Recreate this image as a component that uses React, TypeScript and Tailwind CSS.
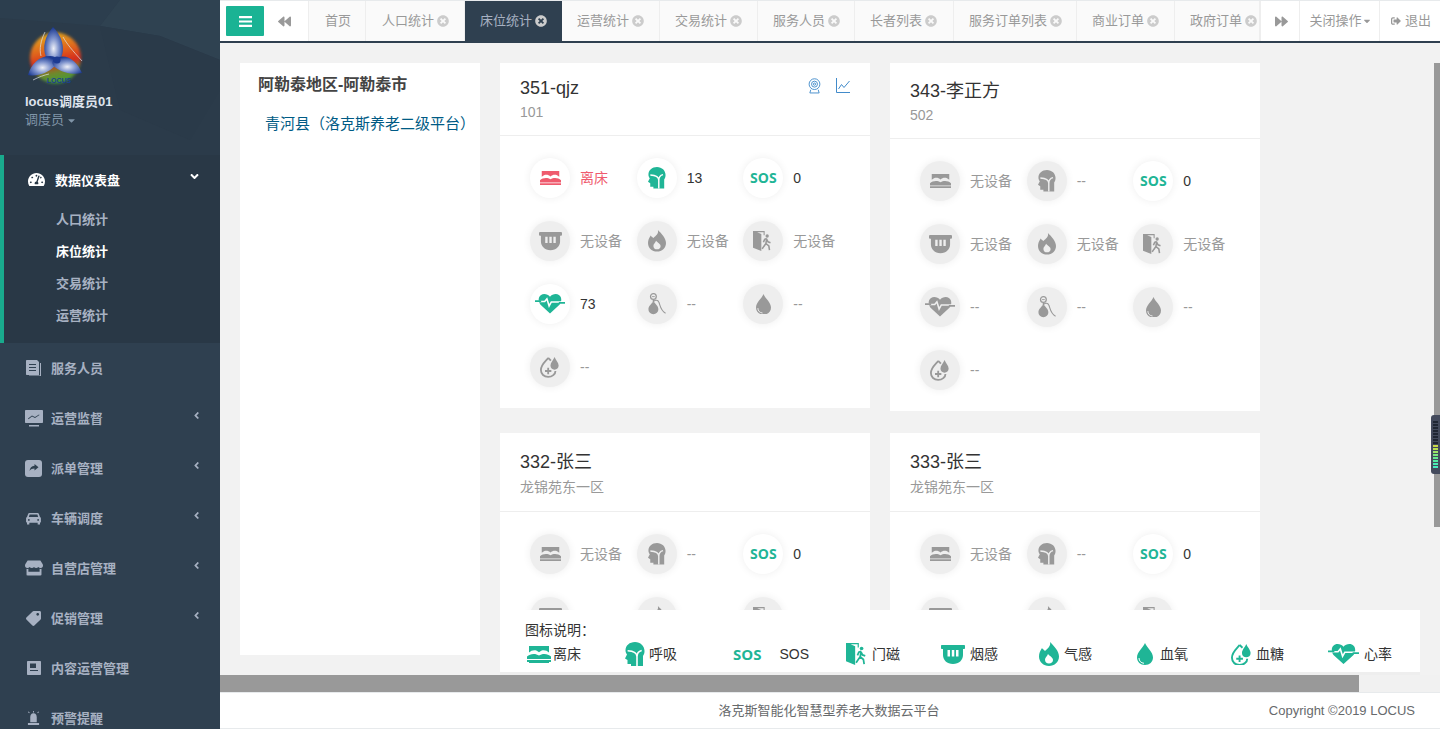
import React from "react";
import { FaBackward, FaForward, FaTimesCircle, FaSignOutAlt, FaCaretDown, FaAngleLeft, FaAngleDown, FaTachometerAlt, FaStore, FaTag } from "react-icons/fa";

const GREEN = "#1fb596";
const FONT = "font-['Liberation_Sans','Noto_Sans_CJK_SC',sans-serif]";

type IconProps = { c: string; bg: string; w: number };

function Bed({ c, w }: IconProps) {
  return (
    <svg viewBox="0 0 24 17" width={w} fill={c}>
      <path d="M2 0h20v6.500l-2.500-1.700c-2.500-1-5.500-.6-7.500 1.500-2-2.100-5-2.500-7.500-1.500L2 6.500z" />
      <path d="M0 10.500c3-3 8.500-3.500 12-1 3.500-2.500 9-2 12 1V13H0z" />
      <path d="M0 14h24v2H22v1H2v-1H0z" />
    </svg>
  );
}
function Head({ c, bg, w }: IconProps) {
  return (
    <svg viewBox="0 0 20 24" width={w} fill={c}>
      <path d="M10 0c5.500 0 9.500 4 9.500 9 0 2-.5 3.500-1.500 5v10H6v-2H2.500v-4L0 16.500l2-4C1 11 .5 10 .5 8.500.5 3.500 4.500 0 10 0z" />
      <path d="M2.600 8.800c4 .2 9.400 1.500 9.400 6V24M16.700 8.500c-2.700.6-4.700 3-4.700 6.300" fill="none" stroke={bg} strokeWidth="1.600" />
    </svg>
  );
}
function Flame({ c, w }: IconProps) {
  return (
    <svg viewBox="0 0 20 24" width={w} fill={c}>
      <path fillRule="evenodd" d="M11 0c1 4-2 6-5 9-1.500-1.500-2.500-2-3-3C1 9 0 11.500 0 14.500 0 20 4.500 24 10 24s10-4 10-9.500C20 9 15 4 11 0zM10 21.500c-2.500 0-4-1.800-4-3.800 0-2.200 2-3.200 3-5.700 1.500 2 5 3.500 5 6 0 2-1.700 3.500-4 3.500z" />
    </svg>
  );
}
function Door({ c, w }: IconProps) {
  return (
    <svg viewBox="0 0 24 24" width={w} fill={c}>
      <path d="M0 0h14v5h-1.300V1.400H5L10 3.500V24L0 20z" />
      <circle cx="17" cy="6" r="2" />
      <path d="M16.500 9l-2.500 1-1.500 3.500M16.500 9l-1 6-2.500 3.500-2 3M15.500 15l3.500 3 .8 5M16.500 10l1.500 3 3 1" fill="none" stroke={c} strokeWidth="1.900" />
    </svg>
  );
}
function Smoke({ c, w }: IconProps) {
  return (
    <svg viewBox="0 0 24 20" width={w} fill={c}>
      <path fillRule="evenodd" d="M1 1h22c.6 0 1 .4 1 1v2c0 .6-.4 1-1 1h-1v6c0 5-4 9-10 9S2 16 2 11V5H1c-.6 0-1-.4-1-1V2c0-.6.4-1 1-1zM6.500 6v6.500H9V6zM10.800 6v6.500h2.500V6zM15 6v6.500h2.500V6z" />
    </svg>
  );
}
function Heart({ c, bg, w }: IconProps) {
  return (
    <svg viewBox="-2 0 34 22" width={w} fill={c}>
      <path d="M15 22L4 12C0 6 3 0 8.500 0 11 0 13.500 1 15 3c1.500-2 4-3 6.500-3C27 0 30 6 26 12z" />
      <path d="M-2 8.500h11l2.500-3 2.500 8 2.500-4.500h15" fill="none" stroke={bg} strokeWidth="1.800" />
      <path d="M-2 8h7M25 10h7" fill="none" stroke={c} strokeWidth="1.900" />
    </svg>
  );
}
function Pressure({ c, w }: IconProps) {
  return (
    <svg viewBox="0 0 20 24" width={w} fill={c}>
      <circle cx="6" cy="4" r="3.200" fill="none" stroke={c} strokeWidth="1.400" />
      <path d="M4.500 4h3" stroke={c} strokeWidth="1" />
      <path d="M6 7.500v3.500" stroke={c} strokeWidth="1.500" />
      <path d="M4.500 10.500h3c.5 2 4 3.500 4 7.500 0 3-2.500 5.500-5.500 5.500S.5 21 .5 18c0-4 3.500-5.500 4-7.500z" />
      <path d="M6 9.500c2-2 5-2 6 .5 1.500 3 1.500 9 7.500 12.500" fill="none" stroke={c} strokeWidth="1.200" />
    </svg>
  );
}
function Drop({ c, bg, w }: IconProps) {
  return (
    <svg viewBox="0 0 16 22" width={w} fill={c}>
      <path d="M8 0C6 5 0 9 0 14.500 0 19 3.500 22 8 22s8-3 8-7.500C16 9 10 5 8 0z" />
      <path d="M2 15c0 3 2 5 5 5.300" fill="none" stroke={bg} strokeWidth="1" />
    </svg>
  );
}
function Glucose({ c, w }: IconProps) {
  return (
    <svg viewBox="0 0 22 24" width={w} fill={c}>
      <path d="M9 2C7.500 5 1 9 1 15.500 1 20 4.500 23 9 23s8-3 8-6.500" fill="none" stroke={c} strokeWidth="2" />
      <path d="M9 2l3 3" fill="none" stroke={c} strokeWidth="2" />
      <path d="M16 1c-1 3-4.500 6-4.500 9.500 0 3 2 4.500 4.500 4.500s4.500-1.500 4.500-4.500C20.500 7 17 4 16 1z" />
      <path d="M8 13h2v2.500h2.500v2H10V20H8v-2.500H5.500v-2H8z" />
    </svg>
  );
}
function SOS({ c, w }: IconProps) {
  return (
    <span className="font-['Open_Sans',sans-serif] font-bold leading-none" style={{ color: c, fontSize: w }}>
      SOS
    </span>
  );
}

const ICONS = {
  bed: { C: Bed, w: 21 },
  head: { C: Head, w: 18 },
  sos: { C: SOS, w: 14 },
  smoke: { C: Smoke, w: 23 },
  flame: { C: Flame, w: 18 },
  door: { C: Door, w: 20 },
  heart: { C: Heart, w: 30 },
  bp: { C: Pressure, w: 18 },
  drop: { C: Drop, w: 15 },
  glucose: { C: Glucose, w: 20 },
};
type IconName = keyof typeof ICONS;

type Item = { icon: IconName; text: string; state?: "on" | "alert" };

function Sensor({ icon, text, state }: Item) {
  const { C, w } = ICONS[icon];
  const on = !!state;
  const c = state === "alert" ? "#ef5b6e" : state === "on" ? GREEN : "#999999";
  const bg = on ? "#ffffff" : "#eeeeee";
  return (
    <div className="flex items-center h-10 mb-[23px]">
      <div
        className={`w-10 h-10 rounded-full flex items-center justify-center flex-none shadow-[0_0_8px_rgba(0,0,0,0.07)] ${on ? "bg-white" : "bg-[#eeeeee]"}`}
      >
        <C c={c} bg={bg} w={w} />
      </div>
      <span className={`ml-2.5 text-sm ${state === "alert" ? "text-[#ef5b6e]" : state === "on" ? "text-[#333333]" : "text-[#999999]"}`}>{text}</span>
    </div>
  );
}

const offlineFull: Item[] = [
  { icon: "bed", text: "无设备" },
  { icon: "head", text: "--" },
  { icon: "sos", text: "0", state: "on" },
  { icon: "smoke", text: "无设备" },
  { icon: "flame", text: "无设备" },
  { icon: "door", text: "无设备" },
  { icon: "heart", text: "--" },
  { icon: "bp", text: "--" },
  { icon: "drop", text: "--" },
  { icon: "glucose", text: "--" },
];

const first: Item[] = [
  { icon: "bed", text: "离床", state: "alert" },
  { icon: "head", text: "13", state: "on" },
  { icon: "sos", text: "0", state: "on" },
  { icon: "smoke", text: "无设备" },
  { icon: "flame", text: "无设备" },
  { icon: "door", text: "无设备" },
  { icon: "heart", text: "73", state: "on" },
  { icon: "bp", text: "--" },
  { icon: "drop", text: "--" },
  { icon: "glucose", text: "--" },
];

function Card({ title, sub, items, head, subc, actions }: { title: string; sub: string; items: Item[]; head: string; subc: string; actions?: boolean }) {
  return (
    <div className="w-[370px] bg-white self-start">
      <div className={`relative px-5 border-b border-[#eeeeee] ${head}`}>
        <div className="text-lg leading-[26px] text-[#333333]">{title}</div>
        <div className={`text-sm leading-5 text-[#999999] ${subc}`}>{sub}</div>
        {actions && (
          <div className="absolute right-5 top-[15px] flex gap-[15px]">
            <svg viewBox="0 0 14 17" width="13" height="16" fill="none" stroke="#428bca" strokeWidth="1">
              <circle cx="7" cy="6.500" r="5.800" />
              <circle cx="7" cy="6.500" r="3.200" />
              <circle cx="7" cy="6.500" r="1.200" />
              <path d="M3 12.500l-1 3.500h10l-1-3.500" />
            </svg>
            <svg viewBox="0 0 14 15" width="14" height="15" fill="none" stroke="#428bca" strokeWidth="1">
              <path d="M.5 0v14.500H14" />
              <path d="M2.500 11l3-4.500 2.500 3L13.500 3" />
            </svg>
          </div>
        )}
      </div>
      <div className="grid grid-cols-3 pl-[30px] pr-5 pt-[22px] pb-[21px] [&>*:nth-last-child(1)]:mb-0">
        {items.map((it, i) => (
          <Sensor key={i} {...it} />
        ))}
      </div>
    </div>
  );
}

function Logo() {
  return (
    <svg viewBox="0 0 60 62" width="60" height="62">
      <defs>
        <linearGradient id="rim" x1="0.3" y1="0" x2="0.5" y2="1">
          <stop offset="0%" stopColor="#e3ac1e" />
          <stop offset="38%" stopColor="#e0621e" />
          <stop offset="62%" stopColor="#d4281f" />
          <stop offset="80%" stopColor="#6f8a2c" />
          <stop offset="100%" stopColor="#3f9a3a" />
        </linearGradient>
        <radialGradient id="petal" cx="50%" cy="60%" r="58%">
          <stop offset="0%" stopColor="#eef0f8" />
          <stop offset="50%" stopColor="#7d92cc" />
          <stop offset="100%" stopColor="#1c3a92" />
        </radialGradient>
        <filter id="soft">
          <feGaussianBlur stdDeviation="1.400" />
        </filter>
      </defs>
      <circle cx="29.500" cy="33" r="25.500" fill="url(#rim)" filter="url(#soft)" />
      <path d="M27 2C19 11 16 22 20 32c3 6 7 7 11 5 8-5 9-22-4-35z" fill="url(#petal)" />
      <path d="M2 50c3-11 11-19 22-19 7 0 9 5 5 10-7 7-18 11-27 9z" fill="url(#petal)" />
      <path d="M56 48c-4-10-13-19-24-16-7 2-7 8-2 11 7 5 18 7 26 5z" fill="url(#petal)" />
      <circle cx="31" cy="35" r="3.500" fill="#1c3a92" />
      <path d="M19 7c-4 8-6 17-4 24M37 12c4 7 9 13 19 24M7 55c6-3 11-5 16-6" fill="none" stroke="#dfe3ea" strokeWidth="0.700" />
      <text x="33" y="58" fill="#1c3f90" fontSize="7" fontWeight="700" fontFamily="'Liberation Sans',sans-serif" textAnchor="middle">LOCUS</text>
    </svg>
  );
}

function Monitor() {
  return (
    <svg viewBox="0 0 18 17" width="18" height="17" fill="#a7b1c2">
      <path fillRule="evenodd" d="M1 0h16c.6 0 1 .4 1 1v11c0 .6-.4 1-1 1H1c-.6 0-1-.4-1-1V1c0-.6.4-1 1-1zM3 8.500l.5.7 3.500-2.700 3 1.500 4.500-3-.5-.6L10 7 7 5.500z" />
      <path d="M4 15h10v1.500H4z" />
    </svg>
  );
}
function Doc() {
  return (
    <svg viewBox="0 0 15 16" width="15" height="16" fill="#a7b1c2">
      <path fillRule="evenodd" d="M1 0h10l2 2v13H1c-.6 0-1-.4-1-1V1c0-.6.4-1 1-1zM3 4v1h7V4zM3 7v1h7V7zM3 10v1h7v-1z" />
      <path d="M14 3h1v13H3v-.5h11z" />
    </svg>
  );
}
function News() {
  return (
    <svg viewBox="0 0 14 14" width="14" height="14" fill="#a7b1c2">
      <path fillRule="evenodd" d="M1 0h12c.6 0 1 .4 1 1v12c0 .6-.4 1-1 1H1c-.6 0-1-.4-1-1V1c0-.6.4-1 1-1zM3 2.500V7h6V2.500zM3 9v1h8V9z" />
    </svg>
  );
}
function Alarm() {
  return (
    <svg viewBox="0 0 14 15" width="13" height="14" fill="#a7b1c2">
      <path d="M7 2.500c2.500 0 3.500 2 3.500 4.500v5h-7V7c0-2.500 1-4.500 3.500-4.500z" />
      <path d="M1 13h12v2H1zM6.500 0h1v1.500h-1zM1 1l.8-.6 1.200 1.500-.8.6zM13 1l-.8-.6-1.200 1.500.8.6z" />
    </svg>
  );
}
function ShareBox() {
  return (
    <svg viewBox="0 0 17 17" width="17" height="17">
      <rect width="17" height="17" rx="3" fill="#a7b1c2" />
      <path d="M9.500 4l4 3.200-4 3.200V8.500c-2.300 0-3.700.7-5 2.500.4-3 2-5 5-5.200z" fill="#2f4050" />
    </svg>
  );
}
function CarFront() {
  return (
    <svg viewBox="0 0 16 14" width="15" height="13" fill="#a7b1c2">
      <path fillRule="evenodd" d="M3.500 1h9c.5 0 1 .3 1.200.8L15 5.500c.6.3 1 .8 1 1.500v3.500c0 .5-.5 1-1 1v2h-2.500v-2h-9v2H1v-2c-.5 0-1-.5-1-1V7c0-.7.4-1.200 1-1.500l1.300-3.700C2.500 1.300 3 1 3.500 1zM3.800 2.800L3 5.500h10l-.8-2.700zM3 7.500a1 1 0 1 0 0 2 1 1 0 0 0 0-2zM13 7.500a1 1 0 1 0 0 2 1 1 0 0 0 0-2z" />
    </svg>
  );
}

const menu: { t: string; icon: React.ReactNode; arrow?: boolean }[] = [
  { t: "服务人员", icon: <Doc /> },
  { t: "运营监督", icon: <Monitor />, arrow: true },
  { t: "派单管理", icon: <ShareBox />, arrow: true },
  { t: "车辆调度", icon: <CarFront />, arrow: true },
  { t: "自营店管理", icon: <FaStore size={18} />, arrow: true },
  { t: "促销管理", icon: <FaTag size={15} className="-scale-x-100" />, arrow: true },
  { t: "内容运营管理", icon: <News /> },
  { t: "预警提醒", icon: <Alarm /> },
];

function Sidebar() {
  return (
    <aside className="w-[220px] flex-none bg-[#2f4050] overflow-hidden flex flex-col h-full">
      <div className="relative h-[155px] flex-none bg-[#2b3b4a] overflow-hidden">
        <svg className="absolute inset-0" width="220" height="155" viewBox="0 0 220 155">
          <path d="M0 0h120l-20 26L0 18z" fill="#2c3e4e" />
          <path d="M120 0h100v60l-60-24-60-10z" fill="#2f4251" />
          <path d="M100 26l60 10 60 24v30l-30 50-70-30z" fill="#2a3a49" />
        </svg>
        <div className="absolute left-[26px] top-[25px]">
          <Logo />
        </div>
        <div className="absolute left-[25px] top-[94px] text-[13px] leading-4 font-bold text-[#dfe4ed]">locus调度员01</div>
        <div className="absolute left-[25px] top-[112px] text-[13px] leading-4 text-[#8095a8] flex items-center">
          调度员
          <FaCaretDown size={11} className="ml-0.5" />
        </div>
      </div>
      <div className="bg-[#293846] border-l-4 border-[#19aa8d] h-[188px] flex-none">
        <div className="h-[49px] flex items-center pl-[24px] pr-[19px] text-white font-semibold text-[13px]">
          <FaTachometerAlt size={17} className="flex-none" />
          <span className="ml-2.5 flex-1 pt-0.5">数据仪表盘</span>
          <FaAngleDown size={13} className="-mt-1.5" />
        </div>
        {["人口统计", "床位统计", "交易统计", "运营统计"].map((s, i) => (
          <div key={s} className={`h-8 flex items-center pl-[52px] text-[13px] font-semibold ${i === 1 ? "text-white" : "text-[#a7b1c2]"}`}>
            {s}
          </div>
        ))}
      </div>
      {menu.map((m) => (
        <div key={m.t} className="h-[50px] flex-none flex items-center text-[#a7b1c2] text-[13px] font-semibold pr-[18px]">
          <div className="w-[51px] flex-none flex justify-center pl-[24px] pr-[8px]">{m.icon}</div>
          <span className="flex-1 pt-0.5">{m.t}</span>
          {m.arrow && <FaAngleLeft size={11} className="-mt-1.5" />}
        </div>
      ))}
    </aside>
  );
}

const tabs: { t: string; w: string; p: string }[] = [
  { t: "人口统计", w: "w-[99px]", p: "pl-4" },
  { t: "床位统计", w: "w-[97px]", p: "pl-[15px]" },
  { t: "运营统计", w: "w-[98px]", p: "pl-[15px]" },
  { t: "交易统计", w: "w-[98px]", p: "pl-[15px]" },
  { t: "服务人员", w: "w-[97px]", p: "pl-[15px]" },
  { t: "长者列表", w: "w-[99px]", p: "pl-[15px]" },
  { t: "服务订单列表", w: "w-[123px]", p: "pl-[15px]" },
  { t: "商业订单", w: "w-[98px]", p: "pl-[15px]" },
  { t: "政府订单", w: "w-[85px]", p: "pl-[15px]" },
];

function TopBar() {
  return (
    <header className="h-[43px] flex-none flex bg-white border-t border-[#e7eaec] border-b-2 border-b-[#2f4050] text-[13px] text-[#999999]">
      <div className="w-[44px] flex-none flex items-center justify-end">
        <div className="w-[38px] h-[30px] bg-[#1ab394] flex items-center justify-center rounded-[1px]">
          <svg width="13" height="11" viewBox="0 0 13 11" fill="#fff">
            <path d="M0 0h13v2.200H0zM0 4.400h13v2.200H0zM0 8.800h13V11H0z" />
          </svg>
        </div>
      </div>
      <div className="w-[45px] flex-none flex items-center justify-center pr-1 border-r border-[#eeeeee]">
        <FaBackward size={13} className="text-[#999999]" />
      </div>
      <div className="w-[57px] flex-none flex items-center justify-center pl-0.5 bg-[#fafafa] border-r border-[#eeeeee]">首页</div>
      {tabs.map((x, i) => {
        const active = i === 1;
        return (
          <div
            key={x.t}
            className={`${x.w} ${x.p} flex-none flex items-center overflow-hidden ${active ? "bg-[#2f4050] text-[#a7b1c2]" : "bg-[#fafafa] border-r border-[#eeeeee]"}`}
          >
            <span className="flex-none">{x.t}</span>
            <span className="relative flex-none ml-[3px] w-3 h-3 flex items-center justify-center">
              <FaTimesCircle size={12} className="text-[#cccccc]" />
            </span>
          </div>
        );
      })}
      <div className="w-[40px] flex-none flex items-center justify-center pl-0.5 border-l border-r border-[#eeeeee]">
        <FaForward size={13} className="text-[#999999]" />
      </div>
      <div className="w-[80px] flex-none flex items-center justify-center pl-0.5 border-r border-[#eeeeee]">
        关闭操作
        <FaCaretDown size={10} />
      </div>
      <div className="flex-1 flex items-center justify-center pl-0.5">
        <FaSignOutAlt size={10} className="mr-1" />
        退出
      </div>
    </header>
  );
}

const legend: { icon: IconName; iw: number; t: string; w: string; gap: string }[] = [
  { icon: "bed", iw: 24, t: "离床", w: "w-[98px]", gap: "ml-0.5" },
  { icon: "head", iw: 20, t: "呼吸", w: "w-[108px]", gap: "ml-1" },
  { icon: "sos", iw: 15, t: "SOS", w: "w-[113px]", gap: "ml-[18px]" },
  { icon: "door", iw: 22, t: "门磁", w: "w-[95px]", gap: "ml-1" },
  { icon: "smoke", iw: 24, t: "烟感", w: "w-[98px]", gap: "ml-[5px]" },
  { icon: "flame", iw: 20, t: "气感", w: "w-[98px]", gap: "ml-[5px]" },
  { icon: "drop", iw: 16, t: "血氧", w: "w-[94px]", gap: "ml-[7px]" },
  { icon: "glucose", iw: 21, t: "血糖", w: "w-[97px]", gap: "ml-1" },
  { icon: "heart", iw: 31, t: "心率", w: "w-[109px]", gap: "ml-[5px]" },
];

function Legend() {
  return (
    <div className="absolute left-[280px] top-[567px] w-[920px] h-[65px] bg-white border-b-[3px] border-[#eeeeee] pl-[25px] pt-[12px] text-sm text-[#333333]">
      <div className="leading-4">图标说明：</div>
      <div className="flex items-center h-[26px] mt-[3px] ml-0.5">
        {legend.map((l) => {
          const { C } = ICONS[l.icon];
          return (
            <div key={l.t} className={`${l.w} flex-none flex items-center`}>
              <C c={GREEN} bg="#ffffff" w={l.iw} />
              <span className={l.gap}>{l.t}</span>
            </div>
          );
        })}
        <svg viewBox="0 0 20 24" width="20" className="flex-none">
          <circle cx="10" cy="5" r="4" fill={GREEN} />
          <path d="M3 24V12h14v12z" fill={GREEN} />
        </svg>
      </div>
    </div>
  );
}

const leds = ["#1f2633", "#1f2633", "#1f2633", "#1f2633", "#1f2633", "#1f2633", "#1f2633", "#1f2633", "#c9d84a", "#b9e052", "#9ce568", "#7ee97e", "#66ea90", "#53eba2", "#4aebb4", "#47ecc0"];

export default function App() {
  return (
    <div className={`h-screen w-full flex overflow-hidden ${FONT} bg-[#f2f2f2]`}>
      <Sidebar />
      <div className="flex-1 min-w-0 flex flex-col h-full">
        <TopBar />
        <main className="flex-1 min-h-0 relative overflow-hidden">
          <div className="flex items-start gap-5 pl-5 pt-5">
            <div className="w-[240px] h-[592px] flex-none bg-white">
              <div className="pl-[18px] pt-3 text-base leading-5 font-bold text-[#444444]">阿勒泰地区-阿勒泰市</div>
              <div className="pl-[25px] pt-[19px] text-[15px] leading-5 text-[#005b85] [text-spacing-trim:space-all]">青河县（洛克斯养老二级平台）</div>
            </div>
            <div className="grid grid-cols-[370px_370px] gap-x-5 gap-y-[22px] auto-rows-[348px] flex-none">
              <Card title="351-qjz" sub="101" items={first} head="pt-3 h-[73px]" subc="mt-px" actions />
              <Card title="343-李正方" sub="502" items={offlineFull} head="pt-[15px] h-[76px]" subc="mt-px" />
              <Card title="332-张三" sub="龙锦苑东一区" items={offlineFull.slice(0, 6)} head="pt-4 h-[79px]" subc="mt-0.5" />
              <Card title="333-张三" sub="龙锦苑东一区" items={offlineFull.slice(0, 6)} head="pt-4 h-[79px]" subc="mt-0.5" />
            </div>
          </div>
          <div className="absolute right-0 top-5 w-1.5 h-[464px] bg-[#999999]" />
          <div className="absolute right-0 top-[372px] w-[9px] h-[59px] bg-[#434a5c] rounded-l-[3px] flex flex-col justify-center items-end pr-0.5 gap-px">
            {leds.map((c, i) => (
              <div key={i} className="w-[5px] h-[2px]" style={{ backgroundColor: c }} />
            ))}
          </div>
          <Legend />
        </main>
        <div className="h-[17px] flex-none bg-[#f1f1f1]">
          <div className="h-full w-[1139px] bg-[#999999]" />
        </div>
        <footer className="h-[37px] flex-none bg-white border-t border-b border-[#e7eaec] flex items-center text-[#676a6c] relative">
          <div className="flex-1 text-center text-[13px] pr-0.5">洛克斯智能化智慧型养老大数据云平台</div>
          <div className="absolute right-[25px] text-[13px]">Copyright ©2019 LOCUS</div>
        </footer>
      </div>
    </div>
  );
}
